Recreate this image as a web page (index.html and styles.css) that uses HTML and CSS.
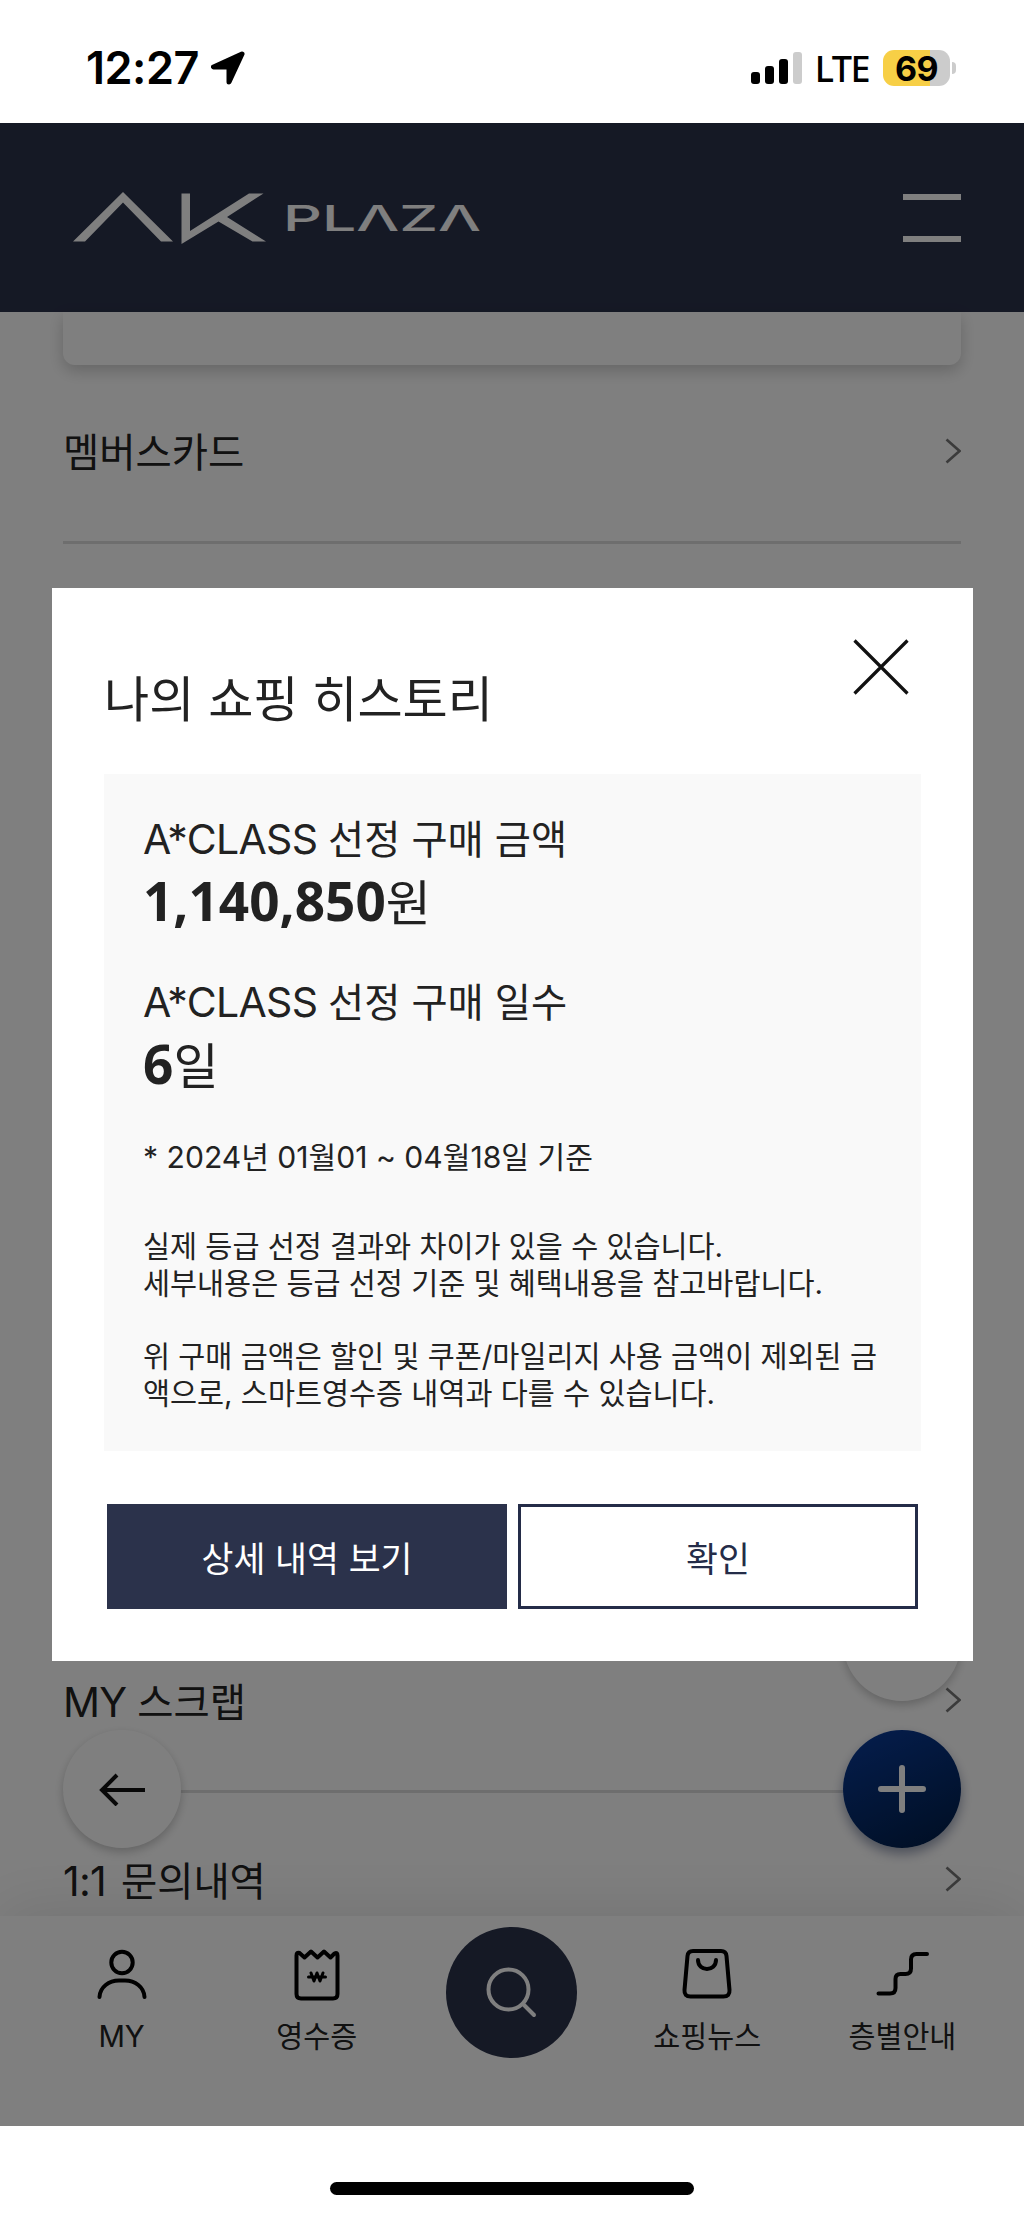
FILE: index.html
```html
<!DOCTYPE html>
<html lang="ko">
<head>
<meta charset="utf-8">
<title>AK PLAZA</title>
<link rel="stylesheet" href="styles.css">
</head>
<body>
<div class="status">
  <div class="status-left">
    <span class="clock">12:27</span>
    <svg class="loc" width="34" height="34" viewBox="0 0 34 34"><path d="M31 3 2.500 16H18V31Z" stroke="#000" stroke-width="5" stroke-linejoin="round"/></svg>
  </div>
  <div class="status-right">
    <svg width="52" height="34" viewBox="0 0 52 34"><rect x="0" y="21" width="9" height="12" rx="3"/><rect x="14" y="15" width="9" height="18" rx="3"/><rect x="28" y="8" width="9" height="25" rx="3"/><rect x="42" y="1" width="9" height="32" rx="3" fill="#ccc"/></svg>
    <span class="lte">LTE</span>
    <span class="battery">69</span>
    <span class="battery-cap"></span>
  </div>
</div>

<div class="screen">
  <header class="header">
    <svg class="logo" width="420" height="60" viewBox="0 0 420 60">
      <path d="M0 51.500 50 2l50 49.500H88L50 12.500 12 51.500Z" fill="#fff"/>
      <path d="M108.500 3.500h8.500V41L176 3.500h14.500L154 27l39 24.500H179.500L145.500 31.500 108.500 54Z" fill="#fff"/>
      <text class="logo-word" x="210" y="41" textLength="198" lengthAdjust="spacingAndGlyphs">PLΛZΛ</text>
    </svg>
    <div class="menu"><i></i><i></i></div>
  </header>

  <main class="list">
    <div class="card"></div>
    <div class="row"><span class="row-name">멤버스카드</span><svg width="16" height="26" viewBox="0 0 16 26"><path d="M1.500 1.500 14.500 13 1.500 24.500"/></svg></div>
    <div class="hidden-rows"></div>
    <div class="row"><span class="row-name"><span class="latin">MY </span>스크랩</span><svg width="16" height="26" viewBox="0 0 16 26"><path d="M1.500 1.500 14.500 13 1.500 24.500"/></svg></div>
    <div class="row ask"><span class="row-name"><span class="latin">1:1 </span>문의내역</span><svg width="16" height="26" viewBox="0 0 16 26"><path d="M1.500 1.500 14.500 13 1.500 24.500"/></svg></div>
  </main>

  <div class="fab fab-top"></div>
  <div class="fab fab-back"><svg width="48" height="34" viewBox="0 0 48 34"><path d="M47 18H4M19 3 4 18 19 33" fill="none" stroke="#111" stroke-width="4"/></svg></div>
  <div class="fab fab-plus"><svg width="48" height="48" viewBox="0 0 48 48"><path d="M24 3V45M3 24H45" stroke="#fff" stroke-width="6" stroke-linecap="round"/></svg></div>

  <nav class="tabs">
    <div class="tab"><svg width="54" height="54" viewBox="0 0 54 54"><circle cx="27" cy="15.500" r="10.700"/><path d="M4.500 50C5 40 14 33.500 24 33.500h6C40 33.500 49 40 49.500 50"/></svg><span>MY</span></div>
    <div class="tab"><svg width="54" height="54" viewBox="0 0 54 54"><path d="M6.500 8.500Q6.500 5 9.500 6l5 4.500 6.500-6 6.500 6 6.500-6 6.500 6 4-4Q47.500 5 47.500 8.500V47Q47.500 51.500 43 51.500H11Q6.500 51.500 6.500 47Z"/><path d="M18.500 30h17M21 26l3 8 3-8 3 8 3-8" stroke-width="3"/></svg><span>영수증</span></div>
    <div class="search"><svg width="52" height="52" viewBox="0 0 52 52"><circle cx="22.500" cy="22.500" r="20"/><path d="M37 37 48 48"/></svg></div>
    <div class="tab"><svg width="54" height="54" viewBox="0 0 54 54"><path d="M13 4h28q5 0 5.500 5l3 34q.5 6.500-6 6.500h-33q-6.500 0-6-6.500l3-34q.5-5 5.500-5Z"/><path d="M18 13c0 12 18 12 18 0"/></svg><span>쇼핑뉴스</span></div>
    <div class="tab"><svg width="54" height="54" viewBox="0 0 54 54"><path d="M3.500 46.500H15q5.500 0 5.500-5.500V32q0-5 5-5h5q5.500 0 5.500-5.500V12.500q0-5.500 5.500-5.500H52"/></svg><span>층별안내</span></div>
  </nav>

  <div class="dim">
    <section class="modal">
      <div class="modal-head">
        <h1>나의 쇼핑 히스토리</h1>
        <svg class="close" width="56" height="56" viewBox="0 0 56 56"><path d="M1.500 1.500 54.500 54.500M54.500 1.500 1.500 54.500" stroke="#111" stroke-width="3.200"/></svg>
      </div>
      <div class="panel">
        <p class="label"><span class="latin">A*CLASS </span>선정 구매 금액</p>
        <p class="value"><b>1,140,850</b>원</p>
        <p class="label second"><span class="latin">A*CLASS </span>선정 구매 일수</p>
        <p class="value"><b>6</b>일</p>
        <p class="period">* 2024년 01월01 ~ 04월18일 기준</p>
        <p class="note">실제 등급 선정 결과와 차이가 있을 수 있습니다.<br>세부내용은 등급 선정 기준 및 혜택내용을 참고바랍니다.</p>
        <p class="note">위 구매 금액은 할인 및 쿠폰/마일리지 사용 금액이 제외된 금<br>액으로, 스마트영수증 내역과 다를 수 있습니다.</p>
      </div>
      <div class="actions">
        <div class="btn primary">상세 내역 보기</div>
        <div class="btn">확인</div>
      </div>
    </section>
  </div>
</div>
<footer class="home"><i></i></footer>
</body>
</html>
```
FILE: styles.css
```css
* { box-sizing: border-box; margin: 0; padding: 0; }
body { width: 1024px; height: 2216px; background: #fff; color: #222; font-family: Inter, "Noto Sans CJK KR", sans-serif; display: flex; flex-direction: column; overflow: hidden; }
svg { display: block; flex: none; }

.status { height: 123px; flex: none; display: flex; justify-content: space-between; align-items: center; padding: 13px 68px 0 86px; color: #000; }
.status-left, .status-right { display: flex; align-items: center; }
.clock { font-size: 45px; font-weight: 600; line-height: 50px; letter-spacing: -0.5px; }
.loc { margin-left: 12px; }
.lte { font-family: "Noto Sans", sans-serif; font-size: 36px; font-weight: 500; margin-left: 12px; line-height: 38px; padding-top: 2px; letter-spacing: -1.5px; }
.battery { width: 67px; height: 36px; margin-left: 14px; border-radius: 11px; background: linear-gradient(90deg, #f7cf46 70%, #ccc 70%); font-size: 34px; font-weight: 700; line-height: 37px; text-align: center; letter-spacing: -0.5px; }
.battery-cap { width: 4px; height: 12px; margin-left: 2px; border-radius: 0 6px 6px 0; background: #ccc; }

.screen { position: relative; height: 2003px; flex: none; overflow: hidden; display: flex; flex-direction: column; background: #fff; }
.header { height: 189px; flex: none; background: #2b324b; display: flex; justify-content: space-between; align-items: flex-start; padding: 67px 63px 0 73px; }
.logo-word { font: 500 36px Inter, sans-serif; fill: #fff; }
.menu { width: 58px; height: 48px; margin-top: 4px; display: flex; flex-direction: column; justify-content: space-between; }
.menu i { height: 6px; background: #fff; }

.list { flex: 1; padding: 0 63px; }
.card { height: 53px; border-radius: 0 0 12px 12px; box-shadow: 0 6px 16px rgba(0,0,0,.2); }
.row { display: flex; justify-content: space-between; align-items: center; height: 179px; padding-bottom: 4px; border-bottom: 3px solid #ddd; font-size: 39.4px; line-height: 56px; color: #222; }
.row-name { padding-top: 4px; }
.row svg path { fill: none; stroke: #777; stroke-width: 2.600; }
.hidden-rows { height: 1070px; }
.latin { font-size: 41px; letter-spacing: -0.7px; }
.ask .latin { word-spacing: 4px; }

.fab { position: absolute; width: 118px; height: 118px; border-radius: 50%; background: #fff; box-shadow: 0 4px 10px rgba(0,0,0,.22); display: flex; align-items: center; justify-content: center; }
.fab-top { left: 843px; top: 1460px; }
.fab-back { left: 63px; top: 1607px; }
.fab-plus { left: 843px; top: 1607px; background: linear-gradient(155deg, #0a3c9c, #001c44); box-shadow: 0 6px 12px rgba(0,20,70,.4); }

.tabs { position: absolute; left: 0; right: 0; bottom: 0; height: 210px; padding: 0 24px; background: #fff; box-shadow: 0 -6px 60px rgba(0,0,0,.1); display: grid; grid-template-columns: repeat(5, 1fr); justify-items: center; align-items: start; }
.tab { padding-top: 31px; display: flex; flex-direction: column; align-items: center; font-size: 29.3px; white-space: nowrap; }
.tab svg, .search svg { fill: none; stroke: #000; stroke-width: 4; stroke-linecap: round; stroke-linejoin: round; }
.tab span { margin-top: 15px; line-height: 42px; }
.search { width: 131px; height: 131px; margin-top: 11px; border-radius: 50%; background: #2b324b; display: flex; align-items: center; justify-content: center; }
.search svg { stroke: #fff; }

.dim { position: absolute; inset: 0; background: rgba(0,0,0,.5); padding: 465px 51px 0 52px; }
.modal { height: 1073px; background: #fff; padding: 51px 52px; }
.modal-head { height: 135px; display: flex; justify-content: space-between; align-items: flex-start; }
h1 { font-size: 49.1px; font-weight: 400; line-height: 60px; margin-top: 30px; }
.close { margin-right: 12px; }
.panel { height: 677px; background: #f9f9f9; padding: 37px 39px; }
.label { font-size: 39.3px; line-height: 56px; height: 56px; }
.value { font-size: 49px; line-height: 70px; height: 70px; padding-top: 2px; }
.value b { font-family: "Noto Sans"; font-size: 53.1px; font-weight: 700; line-height: 1; }
.second { margin-top: 37px; }
.period { font-size: 30.1px; line-height: 40px; margin-top: 37px; margin-bottom: 52px; }
.note { font-size: 29.4px; line-height: 36.800px; white-space: nowrap; margin-bottom: 36.800px; }
.actions { margin-top: 53px; padding: 0 3px; display: flex; gap: 11px; }
.btn { flex: 1; height: 105px; border: 3px solid #242c48; display: flex; align-items: center; justify-content: center; font-size: 34.7px; color: #242c48; }
.primary { background: #2b324b; color: #fff; border-color: #2b324b; }

.home { flex: 1; padding: 56px 330px 0; }
.home i { display: block; height: 13px; border-radius: 7px; background: #000; }
```
